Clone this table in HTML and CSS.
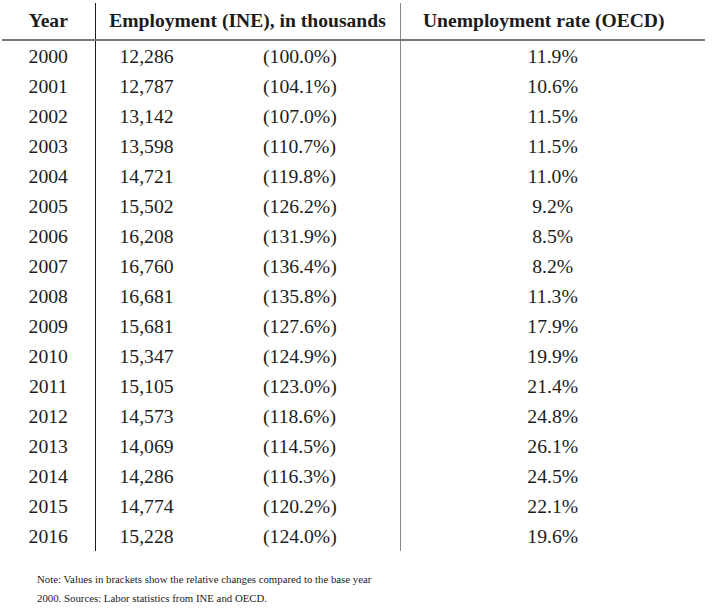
FILE: index.html
```html
<!DOCTYPE html>
<html lang="en">
<head>
<meta charset="utf-8">
<title>Employment and unemployment</title>
<link rel="stylesheet" href="styles.css">
</head>
<body>
<table class="data">
  <colgroup>
    <col class="c-year">
    <col class="c-num">
    <col class="c-pct">
    <col class="c-rate">
  </colgroup>
  <thead>
    <tr>
      <th class="year">Year</th>
      <th class="emp" colspan="2">Employment (INE), in thousands</th>
      <th class="rate">Unemployment rate (OECD)</th>
    </tr>
  </thead>
  <tbody>
    <tr><td class="year">2000</td><td class="num">12,286</td><td class="pct">(100.0%)</td><td class="rate">11.9%</td></tr>
    <tr><td class="year">2001</td><td class="num">12,787</td><td class="pct">(104.1%)</td><td class="rate">10.6%</td></tr>
    <tr><td class="year">2002</td><td class="num">13,142</td><td class="pct">(107.0%)</td><td class="rate">11.5%</td></tr>
    <tr><td class="year">2003</td><td class="num">13,598</td><td class="pct">(110.7%)</td><td class="rate">11.5%</td></tr>
    <tr><td class="year">2004</td><td class="num">14,721</td><td class="pct">(119.8%)</td><td class="rate">11.0%</td></tr>
    <tr><td class="year">2005</td><td class="num">15,502</td><td class="pct">(126.2%)</td><td class="rate">9.2%</td></tr>
    <tr><td class="year">2006</td><td class="num">16,208</td><td class="pct">(131.9%)</td><td class="rate">8.5%</td></tr>
    <tr><td class="year">2007</td><td class="num">16,760</td><td class="pct">(136.4%)</td><td class="rate">8.2%</td></tr>
    <tr><td class="year">2008</td><td class="num">16,681</td><td class="pct">(135.8%)</td><td class="rate">11.3%</td></tr>
    <tr><td class="year">2009</td><td class="num">15,681</td><td class="pct">(127.6%)</td><td class="rate">17.9%</td></tr>
    <tr><td class="year">2010</td><td class="num">15,347</td><td class="pct">(124.9%)</td><td class="rate">19.9%</td></tr>
    <tr><td class="year">2011</td><td class="num">15,105</td><td class="pct">(123.0%)</td><td class="rate">21.4%</td></tr>
    <tr><td class="year">2012</td><td class="num">14,573</td><td class="pct">(118.6%)</td><td class="rate">24.8%</td></tr>
    <tr><td class="year">2013</td><td class="num">14,069</td><td class="pct">(114.5%)</td><td class="rate">26.1%</td></tr>
    <tr><td class="year">2014</td><td class="num">14,286</td><td class="pct">(116.3%)</td><td class="rate">24.5%</td></tr>
    <tr><td class="year">2015</td><td class="num">14,774</td><td class="pct">(120.2%)</td><td class="rate">22.1%</td></tr>
    <tr><td class="year">2016</td><td class="num">15,228</td><td class="pct">(124.0%)</td><td class="rate">19.6%</td></tr>
  </tbody>
</table>
<p class="note">Note: Values in brackets show the relative changes compared to the base year<br>2000. Sources: Labor statistics from INE and OECD.</p>
</body>
</html>
```

FILE: styles.css
```css
html, body {
  margin: 0;
  padding: 0;
  background: #ffffff;
}

body {
  font-family: "Liberation Serif", "Times New Roman", serif;
  color: #1c1c1c;
  padding: 3px 0 0 2px;
}

.data {
  border-collapse: collapse;
  table-layout: fixed;
  width: 703px;
  font-size: 19.7px;
}

.c-year { width: 93px; }
.c-num { width: 168px; }
.c-pct { width: 137px; }
.c-rate { width: 305px; }

.data th,
.data td {
  padding: 0;
  white-space: nowrap;
}

.data th {
  height: 35px;
  font-weight: bold;
  font-size: 19.6px;
  text-align: center;
  vertical-align: middle;
  border-bottom: 2px solid #7a7a7a;
  padding-bottom: 1px;
}

.data th.rate {
  padding-right: 18px;
}

.data td {
  height: 30px;
  line-height: 30px;
}

.data .year {
  text-align: center;
  border-right: 1px solid #1a1a1a;
}

.data .emp {
  border-right: 1px solid #8a8a8a;
}

.data .num {
  padding-left: 24px;
  text-align: left;
}

.data .pct {
  text-align: left;
  border-right: 1px solid #8a8a8a;
}

.data td.rate {
  text-align: center;
}

.note {
  margin: 19px 0 0 35px;
  font-size: 10.8px;
  line-height: 19px;
  color: #222;
}
```
